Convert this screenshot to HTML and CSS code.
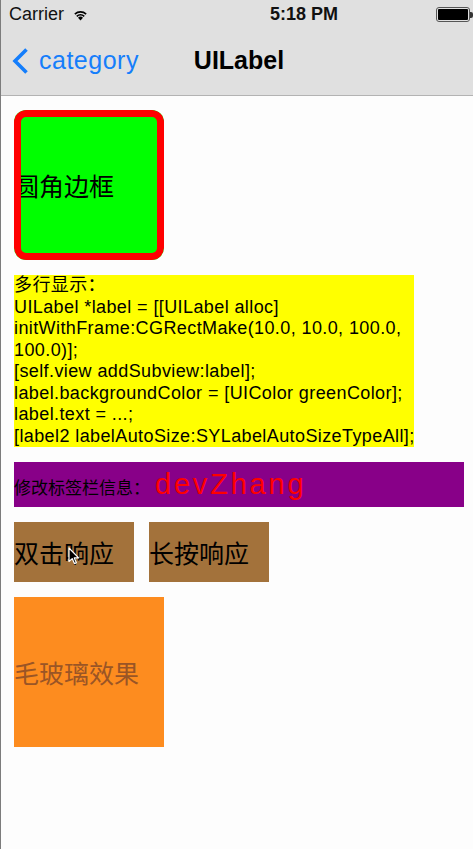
FILE: index.html
```html
<!DOCTYPE html>
<html lang="zh">
<head>
<meta charset="utf-8">
<title>UILabel</title>
<link rel="stylesheet" href="styles.css">
</head>
<body>
<div class="screen">
  <header class="header">
    <div class="status">
      <div class="status-left">
        <span class="carrier">Carrier</span>
        <svg class="wifi" width="15" height="13" viewBox="0 0 14 13">
          <path d="M7 12.6 L4.5 9.7 A3.7 3.7 0 0 1 9.5 9.7 Z" fill="#000"/>
          <path d="M2.7 7.7 A6.4 6.4 0 0 1 11.3 7.7 L10.2 8.9 A4.8 4.8 0 0 0 3.8 8.9 Z" fill="#000"/>
          <path d="M0.8 5.5 A9.2 9.2 0 0 1 13.2 5.5 L12.1 6.7 A7.6 7.6 0 0 0 1.9 6.7 Z" fill="#000"/>
        </svg>
      </div>
      <span class="time">5:18 PM</span>
      <div class="battery"><div class="battery-body"><div class="battery-fill"></div></div><div class="battery-nub"></div></div>
    </div>
    <nav class="nav">
      <div class="back">
        <svg class="chevron" width="20" height="28" viewBox="0 0 20 28">
          <path d="M15.5 2.5 L4 14 L15.5 25.5" fill="none" stroke="#157efb" stroke-width="3.6" stroke-linecap="butt" stroke-linejoin="miter"/>
        </svg>
        <span class="back-label">category</span>
      </div>
      <div class="title">UILabel</div>
    </nav>
  </header>

  <main class="content">
    <div class="rounded"><span>圆角边框</span></div>

    <div class="multiline">多行显示：<br>UILabel *label = [[UILabel alloc]<br>initWithFrame:CGRectMake(10.0, 10.0, 100.0,<br>100.0)];<br>[self.view addSubview:label];<br>label.backgroundColor = [UIColor greenColor];<br>label.text = ...;<br>[label2 labelAutoSize:SYLabelAutoSizeTypeAll];</div>

    <div class="info"><span class="info-label">修改标签栏信息：</span><span class="info-name">devZhang</span></div>

    <div class="buttons">
      <div class="btn">双击响应
        <svg class="cursor" width="12" height="18" viewBox="0 0 12 18">
          <path d="M1 1 L1 14.5 L4.2 11.6 L6.4 16.6 L8.4 15.7 L6.3 10.9 L10.6 10.9 Z" fill="#000" stroke="#fff" stroke-width="1.2" stroke-linejoin="round"/>
        </svg>
      </div>
      <div class="btn">长按响应</div>
    </div>

    <div class="frosted"><span>毛玻璃效果</span></div>
  </main>
</div>
</body>
</html>
```

FILE: styles.css
```css
* { box-sizing: border-box; }

html, body {
  margin: 0;
  padding: 0;
  background: #fdfdfd;
}

.screen {
  width: 473px;
  height: 849px;
  border-left: 1px solid #7c7c7c;
  background: #fdfdfd;
  font-family: "Liberation Sans", "Noto Sans CJK SC", sans-serif;
  color: #000;
  overflow: hidden;
}

.header {
  background: #e0e0e0;
  border-bottom: 1px solid #b3b3b3;
  height: 96px;
}

.status {
  height: 28px;
  display: flex;
  align-items: center;
  justify-content: space-between;
  padding: 0 0 0 8px;
}

.status-left {
  display: flex;
  align-items: center;
  gap: 9px;
}

.carrier {
  font-size: 18px;
  color: #111;
}

.wifi { margin-top: 1px; }

.time {
  font-size: 18px;
  font-weight: bold;
  color: #111;
  margin-left: 84px;
}

.battery {
  display: flex;
  align-items: center;
  margin-top: 1px;
}

.battery-body {
  width: 34px;
  height: 15px;
  border: 1px solid #555;
  border-radius: 3px;
  padding: 1px;
  background: #e0e0e0;
}

.battery-fill {
  width: 100%;
  height: 100%;
  background: #000;
  border-radius: 1px;
}

.battery-nub {
  width: 3px;
  height: 6px;
  background: #333;
  border-radius: 0 2px 2px 0;
}

.nav {
  height: 67px;
  display: grid;
  grid-template-columns: 1fr auto 1fr;
  align-items: center;
  padding-bottom: 2px;
}

.back {
  display: flex;
  align-items: center;
  gap: 8px;
  padding-left: 10px;
}

.chevron { display: block; }

.back-label {
  font-size: 25px;
  color: #157efb;
  letter-spacing: 0.5px;
}

.title {
  font-size: 25px;
  font-weight: bold;
  color: #000;
  grid-column: 2;
  margin-left: 4px;
}

.content {
  padding: 14px 0 0 13px;
  display: flex;
  flex-direction: column;
  align-items: flex-start;
  gap: 15px;
}

.rounded {
  position: relative;
  width: 150px;
  height: 150px;
  background: #00ff00;
  border-radius: 12px;
  display: flex;
  align-items: center;
  overflow: hidden;
  font-family: "Noto Sans CJK SC", sans-serif;
  font-size: 25px;
}

.rounded::after {
  content: "";
  position: absolute;
  inset: 0;
  border: 7px solid #ff0000;
  border-radius: 12px;
}

.multiline {
  width: 400px;
  height: 172px;
  background: #ffff00;
  font-size: 18px;
  letter-spacing: 0.4px;
  line-height: 21.5px;
  white-space: nowrap;
  font-family: "Liberation Sans", "Noto Sans CJK SC", sans-serif;
}

.info {
  width: 450px;
  height: 45px;
  background: #880088;
  padding-top: 6px;
  white-space: nowrap;
}

.info-label {
  font-family: "Noto Sans CJK SC", sans-serif;
  font-size: 17px;
}

.info-name {
  font-family: "Liberation Sans", sans-serif;
  font-size: 29px;
  color: #ff0000;
  letter-spacing: 2.8px;
  margin-left: 5px;
}

.buttons {
  display: flex;
  gap: 15px;
}

.btn {
  position: relative;
  width: 120px;
  height: 60px;
  background: #a3723b;
  display: flex;
  align-items: center;
  font-family: "Noto Sans CJK SC", sans-serif;
  font-size: 25px;
  white-space: nowrap;
}

.cursor {
  position: absolute;
  left: 54px;
  top: 25px;
}

.frosted {
  width: 150px;
  height: 150px;
  background: #fd8c1f;
  display: flex;
  align-items: center;
  font-family: "Noto Sans CJK SC", sans-serif;
  font-size: 25px;
  color: #9a5526;
}
```
